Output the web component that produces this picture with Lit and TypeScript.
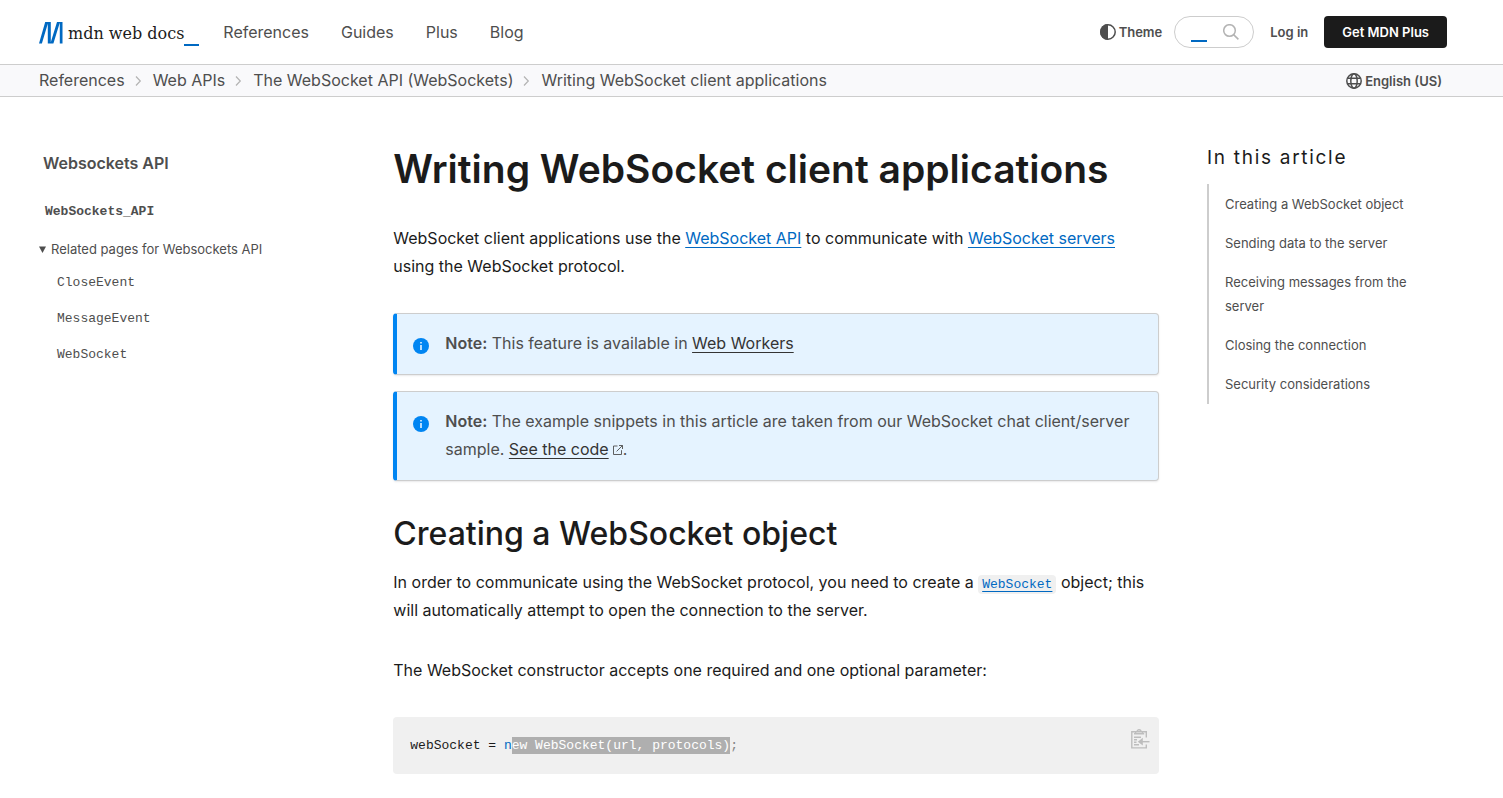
import { LitElement, html, css, svg } from "lit";
import { customElement } from "lit/decorators.js";

const chevron = svg`<svg class="chevron" width="12" height="12" viewBox="0 0 12 12" fill="none" stroke="#b3b3b3" stroke-width="1.2" aria-hidden="true"><path d="M3 1.5 7.3 6 3 10.5"/></svg>`;

const infoIcon = svg`<svg class="info" width="16" height="16" viewBox="0 0 16 16" aria-hidden="true"><circle cx="8" cy="8" r="8" fill="#0085f2"/><path fill="#e5f3ff" d="M7.2 7h1.6v5H7.2zM7.2 4h1.6v1.6H7.2z"/></svg>`;

@customElement("app-root")
export class AppRoot extends LitElement {
  static styles = css`
    :host {
      display: block;
      min-height: 100vh;
      background: #fff;
      color: #1b1b1b;
      font: 16px/28px Inter, sans-serif;
    }
    * { box-sizing: border-box; }
    h1, h2, p, ul, ol, pre { margin: 0; padding: 0; }
    ul, ol { list-style: none; }
    a { color: inherit; text-decoration: none; }
    button { font: inherit; color: inherit; border: 0; background: none; padding: 0; cursor: pointer; }
    svg { display: block; flex: none; }
    code, pre { font-family: "Liberation Mono", monospace; font-size: 13px; }
    .container { max-width: 1441px; margin: 0 auto; padding: 0 25px 0 8px; }

    .top { display: flex; align-items: center; height: 64px; }
    .logo { display: flex; align-items: center; height: 28px; }
    .logo-name { margin-left: 5px; padding-top: 4px; font: 16px/24px "DejaVu Serif", serif; }
    .logo-bar { align-self: flex-end; width: 15px; height: 2px; background: #0069c2; }
    .menu { display: flex; gap: 32px; margin-left: 24px; color: #4e4e4e; }
    .actions { display: flex; align-items: center; margin-left: auto; color: #4e4e4e; font-size: 13px; font-weight: 600; }
    .with-icon { display: flex; align-items: center; gap: 3px; }
    .search { position: relative; display: flex; align-items: center; width: 80px; height: 32px; margin: 0 16px 0 12px; padding: 0 14px 0 16px; border: 1px solid #cdcdcd; border-radius: 16px; }
    .search input { flex: 1; min-width: 0; border: 0; outline: 0; padding: 0; background: none; font: inherit; }
    .cursor { position: absolute; left: 16px; bottom: 5px; width: 16px; height: 2px; background: #0069c2; pointer-events: none; }
    .plus { height: 32px; margin-left: 16px; padding: 0 18px; border-radius: 4px; background: #1b1b1b; color: #fff; line-height: 32px; }

    .crumb-bar { border-top: 1px solid #cdcdcd; border-bottom: 1px solid #cdcdcd; background: #f9f9fb; color: #4e4e4e; }
    .crumbs-row { display: flex; align-items: center; justify-content: space-between; height: 31px; }
    .crumbs { display: flex; }
    .crumbs li { display: flex; align-items: center; }
    .crumbs a { padding-bottom: 2px; }
    .chevron { margin: 0 8px; }
    .language { margin-right: 5px; font-size: 13px; font-weight: 600; }

    .page { display: grid; grid-template-columns: minmax(0, 1fr) minmax(0, 2.5fr) 240px; gap: 48px; padding-top: 48px; }
    .sidebar { color: #4e4e4e; font-size: 13px; }
    .side-title { padding: 4px; font-size: 16px; line-height: 28px; font-weight: 600; }
    .side-root { display: block; margin: 17px 0 11px; padding: 0 6px; line-height: 24px; font-weight: 700; }
    summary { display: flex; align-items: center; gap: 5px; line-height: 28px; cursor: pointer; margin-bottom: 4px; }
    .related { padding-left: 18px; }
    .related li { height: 36px; line-height: 28px; }

    h1 { margin-bottom: 31px; font-size: 39px; line-height: 48px; font-weight: 600; }
    .article p { margin-bottom: 32px; }
    .article p a { color: #0069c2; text-decoration: underline 1px; text-underline-offset: 3px; text-decoration-skip-ink: none; }
    .article p code { padding: 2px 4px; border-radius: 4px; background: #f0f0f0; line-height: 16px; }
    .note { display: flex; gap: 16px; margin-top: 33px; padding: 15px 16px 17px; border: 1px solid #cdcdcd; border-left: 4px solid #0085f2; border-radius: 4px; background: #e5f3ff; box-shadow: 0 1px 2px rgba(43, 42, 51, 0.1); color: #4e4e4e; }
    .note + .note { margin-top: 16px; }
    .article .note p { margin: 0; }
    .article .note a { color: #343434; }
    .note strong { font-weight: 600; }
    .info { margin-top: 9px; }
    .external { display: inline-block; margin-left: 4px; }
    h2 { margin: 32px 0 14px; font-size: 32px; line-height: 41px; font-weight: 500; }
    .sample { display: flex; justify-content: space-between; align-items: flex-start; margin-top: 33px; padding: 12px 9px 14px 17px; border-radius: 4px; background: #f0f0f0; }
    .sample pre { line-height: 28px; padding-top: 3px; }
    .keyword { color: #0069c2; }
    .selected { padding: 1px 0; background: #afafaf; color: #fff; }
    .punct { color: #858585; }

    .toc-title { font-size: 19px; line-height: 24px; font-weight: 400; letter-spacing: 0.09em; margin: 1px 0 14px; }
    .toc ul { display: grid; gap: 15px; padding: 8px 16px; border-left: 2px solid #cdcdcd; color: #4e4e4e; font-size: 13px; line-height: 24px; }
  `;

  render() {
    const crumbs = ["References", "Web APIs", "The WebSocket API (WebSockets)", "Writing WebSocket client applications"];
    const toc = ["Creating a WebSocket object", "Sending data to the server", "Receiving messages from the server", "Closing the connection", "Security considerations"];
    return html`
      <header>
        <div class="container top">
          <a class="logo" href="#" aria-label="MDN homepage">
            <svg width="24" height="24" viewBox="0 0 24 24" fill="#0069c2" aria-hidden="true"><path d="M6.2 2h3.1L2.9 23.5H0zM8.8 2h3v21.5h-3zM18 2h3l-6.6 21.5h-3zM20.8 2h2.7v21.5h-2.7z"/></svg>
            <span class="logo-name">mdn web docs</span><span class="logo-bar"></span>
          </a>
          <nav class="menu" aria-label="Main">
            ${["References", "Guides", "Plus", "Blog"].map((t) => html`<a href="#">${t}</a>`)}
          </nav>
          <div class="actions">
            <button class="with-icon" type="button">
              <svg width="16" height="16" viewBox="0 0 16 16" aria-hidden="true"><circle cx="8" cy="8" r="7.2" fill="none" stroke="#4e4e4e" stroke-width="1.5"/><path d="M8 0a8 8 0 0 0 0 16z" fill="#4e4e4e"/></svg>Theme
            </button>
            <form class="search" role="search">
              <input type="search" aria-label="Search MDN" />
              <span class="cursor"></span>
              <button type="button" aria-label="Search">
                <svg width="16" height="16" viewBox="0 0 16 16" fill="none" stroke="#b3b3b3" stroke-width="1.5"><circle cx="6.5" cy="6.5" r="5.8"/><path d="m10.6 10.6 4.8 4.8"/></svg>
              </button>
            </form>
            <a href="#">Log in</a>
            <a class="plus" href="#">Get MDN Plus</a>
          </div>
        </div>
      </header>
      <div class="crumb-bar">
        <div class="container crumbs-row">
          <nav aria-label="Breadcrumb">
            <ol class="crumbs">${crumbs.map((t, i) => html`<li>${i ? chevron : ""}<a href="#">${t}</a></li>`)}</ol>
          </nav>
          <button class="with-icon language" type="button">
            <svg width="16" height="16" viewBox="0 0 16 16" fill="none" stroke="#4e4e4e" stroke-width="1.5" aria-hidden="true"><circle cx="8" cy="8" r="7.2"/><ellipse cx="8" cy="8" rx="3.2" ry="7.2"/><path d="M1.5 5.3h13M1.5 10.7h13"/></svg>English (US)
          </button>
        </div>
      </div>
      <div class="container page">
        <nav class="sidebar" aria-label="Related topics">
          <div class="side-title">Websockets API</div>
          <a class="side-root" href="#"><code>WebSockets_API</code></a>
          <details open>
            <summary><svg width="7" height="7" viewBox="0 0 7 7" fill="#4e4e4e" aria-hidden="true"><path d="M0 .5h7L3.5 7z"/></svg>Related pages for Websockets API</summary>
            <ul class="related">
              ${["CloseEvent", "MessageEvent", "WebSocket"].map((t) => html`<li><a href="#"><code>${t}</code></a></li>`)}
            </ul>
          </details>
        </nav>
        <main class="article">
          <h1>Writing WebSocket client applications</h1>
          <p>WebSocket client applications use the <a href="#">WebSocket API</a> to communicate with <a href="#">WebSocket servers</a> using the WebSocket protocol.</p>
          <div class="note">${infoIcon}<p><strong>Note:</strong> This feature is available in <a href="#">Web Workers</a></p></div>
          <div class="note">${infoIcon}<p><strong>Note:</strong> The example snippets in this article are taken from our WebSocket chat client/server sample. <a href="#">See the code</a><svg class="external" width="10" height="10" viewBox="0 0 10 10" fill="none" stroke="#4e4e4e" stroke-width="0.9" aria-hidden="true"><path d="M4.5 1H.5v8.5h8V5.2M6 .5h3.5V4M9.5.5 3.6 6.4"/></svg>.</p></div>
          <h2>Creating a WebSocket object</h2>
          <p>In order to communicate using the WebSocket protocol, you need to create a <code><a href="#">WebSocket</a></code> object; this will automatically attempt to open the connection to the server.</p>
          <p>The WebSocket constructor accepts one required and one optional parameter:</p>
          <div class="sample">
            <pre><code>webSocket = <span class="keyword">n</span><span class="selected">ew WebSocket(url, protocols)</span><span class="punct">;</span></code></pre>
            <button type="button" aria-label="Copy to clipboard">
              <svg width="19" height="20" viewBox="0 0 19 20" fill="none" stroke="#bdbdbd" stroke-width="1.4" aria-hidden="true"><path d="M15.3 8.5V2.7H.8v16.2h14.5v-3.4M3 4.8h10.2M4.6 4.5V2.8H6a2 2 0 0 1 4 0h1.5v1.7M3 8.3h7M3 10.8h3M3 13.3h2.5M3 15.8h5"/><path d="M18.5 12.7H9"/><path d="m11.8 8.8-5 3.9 5 3.9z" fill="#bdbdbd" stroke="none"/></svg>
            </button>
          </div>
        </main>
        <aside class="toc">
          <h2 class="toc-title">In this article</h2>
          <ul>${toc.map((t) => html`<li><a href="#">${t}</a></li>`)}</ul>
        </aside>
      </div>
    `;
  }
}
